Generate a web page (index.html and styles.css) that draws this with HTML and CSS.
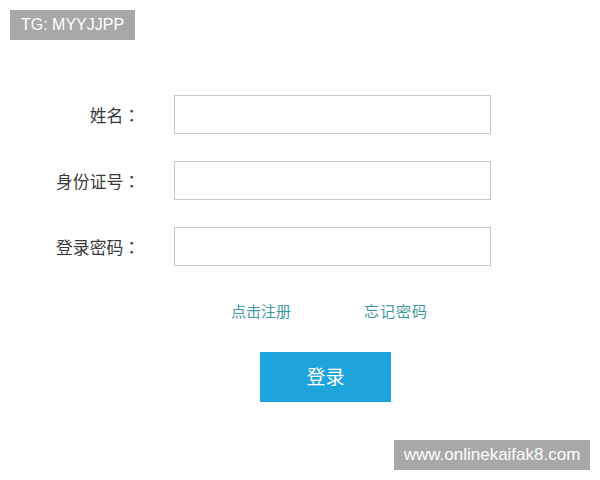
FILE: index.html
```html
<!DOCTYPE html>
<html lang="zh-CN">
<head>
<meta charset="utf-8">
<title>登录</title>
<link rel="stylesheet" href="styles.css">
</head>
<body>
<div class="page">
  <div class="tag">TG: MYYJJPP</div>
  <form class="form">
    <div class="row">
      <label class="label">姓名<span class="colon" lang="ja">：</span></label>
      <input class="field" type="text">
    </div>
    <div class="row">
      <label class="label">身份证号<span class="colon" lang="ja">：</span></label>
      <input class="field" type="text">
    </div>
    <div class="row">
      <label class="label">登录密码<span class="colon" lang="ja">：</span></label>
      <input class="field" type="password">
    </div>
    <div class="links">
      <a class="link">点击注册</a>
      <a class="link link-wide">忘记密码</a>
    </div>
    <div class="actions">
      <button class="btn" type="button">登录</button>
    </div>
  </form>
  <div class="watermark">www.onlinekaifak8.com</div>
</div>
</body>
</html>
```

FILE: styles.css
```css
html, body {
  margin: 0;
  padding: 0;
  background: #ffffff;
}
.page {
  position: relative;
  width: 600px;
  height: 480px;
  padding-top: 10px;
  box-sizing: border-box;
  font-family: "Noto Sans CJK SC", "Liberation Sans", sans-serif;
}
.tag {
  margin-left: 10px;
  width: 125px;
  height: 30px;
  background: #a8a8a8;
  color: #ffffff;
  font-family: "Liberation Sans", sans-serif;
  font-size: 16px;
  line-height: 30px;
  text-align: center;
}
.form {
  margin: 55px 0 0 0;
  display: flex;
  flex-direction: column;
}
.row {
  display: flex;
  align-items: center;
  gap: 34px;
  margin-bottom: 27px;
}
.row:nth-child(3) {
  margin-bottom: 0;
}
.label {
  width: 140px;
  text-align: right;
  font-size: 16.8px;
  color: #3a3a3a;
  line-height: 20px;
}
.colon {
  font-family: "Noto Sans CJK JP", "Noto Sans CJK TC", sans-serif;
}
.field {
  width: 317px;
  height: 39px;
  box-sizing: border-box;
  border: 1px solid #c6c6c6;
  background: #ffffff;
  margin: 0;
  padding: 0 8px;
  outline: none;
}
.links {
  display: flex;
  margin-top: 35px;
  padding-left: 231px;
  gap: 73px;
}
.link {
  font-size: 15px;
  line-height: 20px;
  color: #3e9a9e;
  text-decoration: none;
}
.link-wide {
  letter-spacing: 1px;
}
.actions {
  display: flex;
  padding-left: 260px;
  margin-top: 31px;
}
.btn {
  width: 131px;
  height: 50px;
  border: none;
  background: #1ea4dc;
  color: #ffffff;
  font-family: "Noto Sans CJK SC", sans-serif;
  font-size: 19px;
  line-height: 24px;
  padding: 0 0 3px 0;
  margin: 0;
}
.watermark {
  position: absolute;
  left: 394px;
  top: 440px;
  width: 196px;
  height: 30px;
  background: #a8a8a8;
  color: #ffffff;
  font-family: "Liberation Sans", sans-serif;
  font-size: 17px;
  line-height: 30px;
  text-align: center;
}
```
